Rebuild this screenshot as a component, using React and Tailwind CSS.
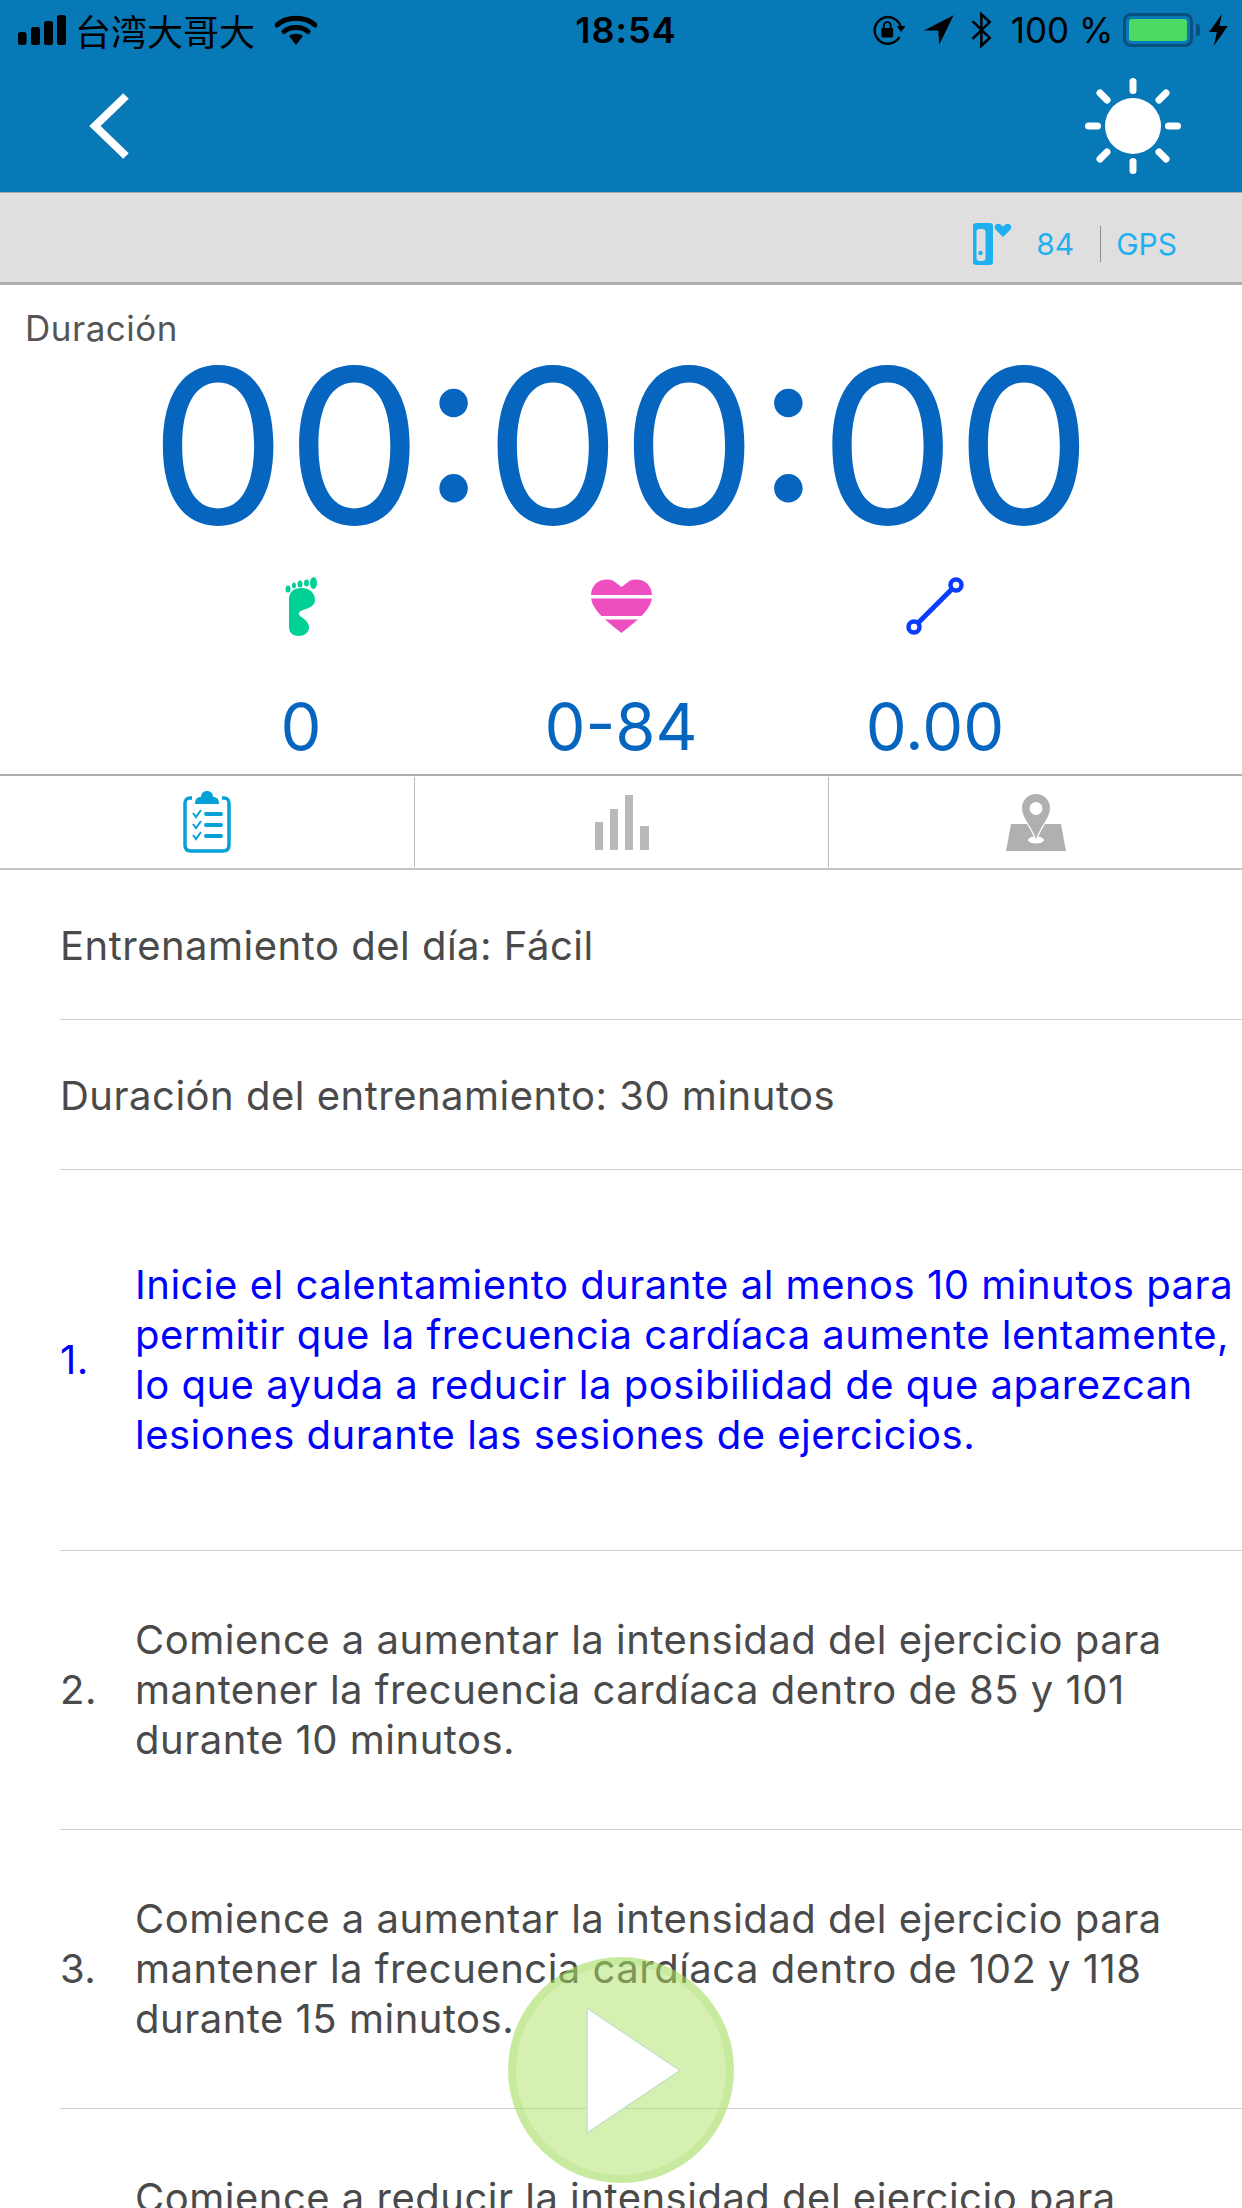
const rows = [
  { num: "1.", blue: true, lines: ["Inicie el calentamiento durante al menos 10 minutos para", "permitir que la frecuencia cardíaca aumente lentamente,", "lo que ayuda a reducir la posibilidad de que aparezcan", "lesiones durante las sesiones de ejercicios."], h: "h-[381px]" },
  { num: "2.", lines: ["Comience a aumentar la intensidad del ejercicio para", "mantener la frecuencia cardíaca dentro de 85 y 101", "durante 10 minutos."], h: "h-[279px]" },
  { num: "3.", lines: ["Comience a aumentar la intensidad del ejercicio para", "mantener la frecuencia cardíaca dentro de 102 y 118", "durante 15 minutos."], h: "h-[279px]" },
  { num: "4.", lines: ["Comience a reducir la intensidad del ejercicio para", "\u00a0", "\u00a0"], h: "h-[279px]" },
];

const StatusBar = () => (
  <div className="h-[60px] flex items-center justify-between pl-[18px] pr-[14px] text-black">
    <div className="flex items-center w-[362px]">
      <svg width="48" height="30" viewBox="0 0 48 30" fill="currentColor">
        <rect x="0" y="17" width="8.5" height="13" rx="2.5" />
        <rect x="13" y="12" width="9" height="18" rx="2.5" />
        <rect x="26" y="6" width="9" height="24" rx="2.5" />
        <rect x="39" y="0" width="9" height="30" rx="2.5" />
      </svg>
      <span className="ml-[9px] text-[36px] leading-[40px] whitespace-nowrap font-['Noto_Sans_CJK_TC','Noto_Sans_CJK_SC',sans-serif]">台湾大哥大</span>
      <svg className="ml-[20px]" width="42" height="30" viewBox="0 0 42 30">
        <path d="M2 10 C12 1 30 1 40 10" fill="none" stroke="currentColor" strokeWidth="5" strokeLinecap="round" />
        <path d="M9 16.5 C15 11 27 11 33 16.5" fill="none" stroke="currentColor" strokeWidth="5" strokeLinecap="round" />
        <path d="M14 21 C18 18 24 18 28 21 L21 30 Z" fill="currentColor" />
      </svg>
    </div>
    <span className="text-[36px] leading-[40px] tracking-[1px] font-semibold">18:54</span>
    <div className="flex items-center w-[356px] justify-end">
      <svg width="34" height="30" viewBox="0 0 34 30">
        <path d="M28 22 A13.5 13.5 0 1 1 29 11" fill="none" stroke="currentColor" strokeWidth="2.4" />
        <path d="M25 11 L34 11 L29.5 17 Z" fill="currentColor" />
        <rect x="9.5" y="13" width="12" height="9.5" rx="1.5" fill="currentColor" />
        <path d="M12 13 V10.5 A3.5 3.5 0 0 1 19 10.5 V13" fill="none" stroke="currentColor" strokeWidth="2" />
      </svg>
      <svg className="ml-[19px]" width="30" height="30" viewBox="0 0 30 30" fill="currentColor">
        <path d="M30 0 L0 15.5 L14.5 15.5 L15.5 30 Z" />
      </svg>
      <svg className="ml-[17px]" width="21" height="36" viewBox="0 0 21 36">
        <path d="M1.5 9 L19 26 L10.5 34 V2 L19 10 L1.5 27" fill="none" stroke="currentColor" strokeWidth="2.6" />
      </svg>
      <span className="ml-[19px] text-[35px] leading-[40px] whitespace-nowrap">100 %</span>
      <div className="ml-[10px] flex items-center">
        <div className="w-[70px] h-[34px] rounded-[8px] border-[3px] border-[#0a4f7d] p-[3px]">
          <div className="w-full h-full bg-[#4cd964] rounded-[3px]"></div>
        </div>
        <div className="w-[4px] h-[12px] ml-[3px] bg-[#0a4f7d] rounded-r-[3px]"></div>
      </div>
      <svg className="ml-[9px]" width="19" height="32" viewBox="0 0 19 32" fill="currentColor">
        <path d="M13 0 L0 18 H8 L5 32 L19 12 H10.5 Z" />
      </svg>
    </div>
  </div>
);

const Sun = () => (
  <svg width="96" height="96" viewBox="0 0 96 96" fill="none" stroke="white" strokeWidth="7" strokeLinecap="round">
    <circle cx="48" cy="48" r="28" fill="white" stroke="none" />
    <path d="M48 3.5 V12.5 M48 83.5 V92.5 M3.5 48 H12.5 M83.5 48 H92.5 M15 15 L22 22 M74 74 L81 81 M81 15 L74 22 M22 74 L15 81" />
  </svg>
);

const BandIcon = () => (
  <svg width="39" height="42" viewBox="0 0 39 42">
    <rect x="0" y="0" width="20" height="42" rx="3" fill="#1fb0ef" />
    <rect x="3.5" y="6" width="9" height="32" rx="3" fill="#dfdfdf" />
    <circle cx="7.5" cy="30" r="2.2" fill="#1fb0ef" />
    <path d="M30 14 L22.5 6.5 C20 3 24 -1 27.5 1.5 L30 3.5 L32.5 1.5 C36 -1 40 3 37.5 6.5 Z" fill="#1fb0ef" />
  </svg>
);

const Foot = () => (
  <svg width="32" height="59" viewBox="0 0 32 59" fill="#00d096">
    <path d="M4 22 C4 14 10 11 17 11 C25 11 30 16 30 23 C30 29 24 31 18 33 C13 35 13 37 15 39 C20 42 24 46 24 50 C24 56 19 59 14 59 C8 59 4 56 4 50 Z" />
    <ellipse cx="28.5" cy="6" rx="3.5" ry="6" />
    <ellipse cx="21.5" cy="6" rx="2.5" ry="3.5" />
    <ellipse cx="15" cy="7" rx="2.5" ry="3.5" />
    <ellipse cx="9" cy="8.5" rx="2" ry="3" />
    <ellipse cx="3" cy="12" rx="2.5" ry="3.5" />
  </svg>
);

const Heart = () => (
  <svg width="61" height="54" viewBox="0 0 61 54">
    <path d="M30.5 8 L22 1.5 C12 -2 0 3 0 17 C0 30 14 41 30.5 54 C47 41 61 30 61 17 C61 3 49 -2 39 1.5 Z" fill="#ee4fc0" />
    <rect x="0" y="16" width="61" height="3.5" fill="white" />
    <rect x="0" y="37" width="61" height="3.5" fill="white" />
  </svg>
);

const Route = () => (
  <svg width="60" height="60" viewBox="0 0 60 60" fill="none" stroke="#0a3cff" strokeWidth="4.5">
    <circle cx="51" cy="9" r="5.5" />
    <circle cx="9" cy="51" r="5.5" />
    <path d="M47 13 L13 47" strokeWidth="5" />
  </svg>
);

const Clipboard = () => (
  <svg width="48" height="62" viewBox="0 0 48 62" fill="none" stroke="#05a0d8">
    <path d="M9 7 H7 C4 7 2 9 2 12 V54 C2 58 4 60 8 60 H40 C44 60 46 58 46 54 V12 C46 9 44 7 41 7 H39" strokeWidth="3.5" />
    <path d="M12 13 C12 8 14 6 18 6 C18 2 21 0 24 0 C27 0 30 2 30 6 C34 6 36 8 36 13 Z" fill="#05a0d8" stroke="none" />
    <path d="M10 22 L13 26 L18 19 M10 33 L13 37 L18 30 M10 44 L13 48 L18 41" strokeWidth="2" />
    <path d="M23 23 H38 M23 34 H38 M23 45 H38" strokeWidth="4" strokeLinecap="round" />
  </svg>
);

const Bars = () => (
  <svg width="54" height="55" viewBox="0 0 54 55" fill="#b9b9b9">
    <rect x="0" y="27" width="8" height="28" />
    <rect x="15" y="14" width="8" height="41" />
    <rect x="30" y="0" width="8" height="55" />
    <rect x="45" y="31" width="9" height="24" />
  </svg>
);

const MapPin = () => (
  <svg width="60" height="57" viewBox="0 0 60 57" fill="#b0b0b0">
    <path d="M5 30 H55 L60 57 H0 Z" />
    <ellipse cx="30" cy="46" rx="8" ry="3.5" fill="white" />
    <path fillRule="evenodd" d="M30 0 C21 0 16 7 16 14 C16 24 25 31 30 45 C35 31 44 24 44 14 C44 7 39 0 30 0 Z M30 8 A6.5 6.5 0 1 1 30 21 A6.5 6.5 0 1 1 30 8 Z" stroke="white" strokeWidth="2.5" paintOrder="stroke" />
  </svg>
);

const Stat = ({ icon, value }) => (
  <div className="flex flex-col items-center">
    <div className="h-[62px] flex items-center">{icon}</div>
    <div className="mt-[55px] text-[65px] leading-[70px] text-[#0565bf]">{value}</div>
  </div>
);

const App = () => {
  return (
    <div className="relative w-[1242px] h-[2208px] overflow-hidden bg-white font-['Inter','Noto_Sans_CJK_TC',sans-serif]">
      <div className="h-[192px] bg-[#0779b7]">
        <StatusBar />
        <div className="flex items-center justify-between pl-[88px] pr-[61px] h-[132px]">
          <svg width="42" height="66" viewBox="0 0 42 66" fill="none" stroke="white" strokeWidth="8">
            <path d="M38 3 L7 33 L38 63" />
          </svg>
          <Sun />
        </div>
      </div>

      <div className="h-[93px] bg-[#dfdfdf] border-t border-[#a9a9a9] border-b-[3px] border-b-[#adadad] pt-[13px] flex items-center justify-end pr-[65px] text-[#1fb0ef]">
        <span className="mr-[-1px] flex items-center"><BandIcon /></span>
        <span className="ml-[25px] text-[30px] leading-[36px]">84</span>
        <span className="ml-[26px] w-px h-[36px] bg-[#8d8d8d]"></span>
        <span className="ml-[15px] text-[30px] leading-[36px]">GPS</span>
      </div>

      <div className="h-[491px] border-b-2 border-[#adadad]">
        <div className="pl-[25px] pt-[22px] text-[35px] leading-[42px] tracking-[0.5px] text-[#555555]">Duración</div>
        <div className="mt-[-3px] h-[200px] text-center text-[216px] leading-[200px] text-[#0565bf] whitespace-nowrap">00:00:00</div>
        <div className="mt-[29px] pl-[141px] grid grid-cols-[320px_320px_308px]">
          <Stat icon={<Foot />} value="0" />
          <Stat icon={<Heart />} value="0-84" />
          <Stat icon={<Route />} value="0.00" />
        </div>
      </div>

      <div className="h-[94px] grid grid-cols-3 items-center border-b-2 border-[#c4c4c4]">
        <div className="h-[90px] flex items-center justify-center"><Clipboard /></div>
        <div className="h-[90px] flex items-center justify-center border-l border-[#bdbdbd]"><Bars /></div>
        <div className="h-[90px] flex items-center justify-center border-l border-[#bdbdbd]"><MapPin /></div>
      </div>

      <div className="ml-[60px] text-[40px] leading-[50px] tracking-[0.5px] text-[#4a4a4a]">
        <div className="h-[150px] pt-[3px] flex items-center border-b border-[#cfcfcf]">Entrenamiento del día: Fácil</div>
        <div className="h-[150px] pt-[3px] flex items-center border-b border-[#cfcfcf]">Duración del entrenamiento: 30 minutos</div>
        {rows.map((row) => (
          <div key={row.num} className={`${row.h} flex items-center border-b border-[#cfcfcf] ${row.blue ? "text-[#0000ff]" : ""}`}>
            <span className="w-[75px] shrink-0">{row.num}</span>
            <div className="whitespace-nowrap">
              {row.lines.map((line, i) => (
                <div key={i}>{line}</div>
              ))}
            </div>
          </div>
        ))}
      </div>

      <div className="absolute left-[508px] top-[1957px] w-[226px] h-[226px] rounded-full bg-[#abe163]/50 border-[8px] border-[#8fd14f]/20 flex items-center justify-center">
        <svg className="ml-[25px]" width="96" height="127" viewBox="0 0 96 127">
          <path d="M1 1 L94 63.5 L1 126 Z" fill="white" stroke="#c3e2c4" strokeWidth="1.5" />
        </svg>
      </div>
    </div>
  );
};

export default App;
